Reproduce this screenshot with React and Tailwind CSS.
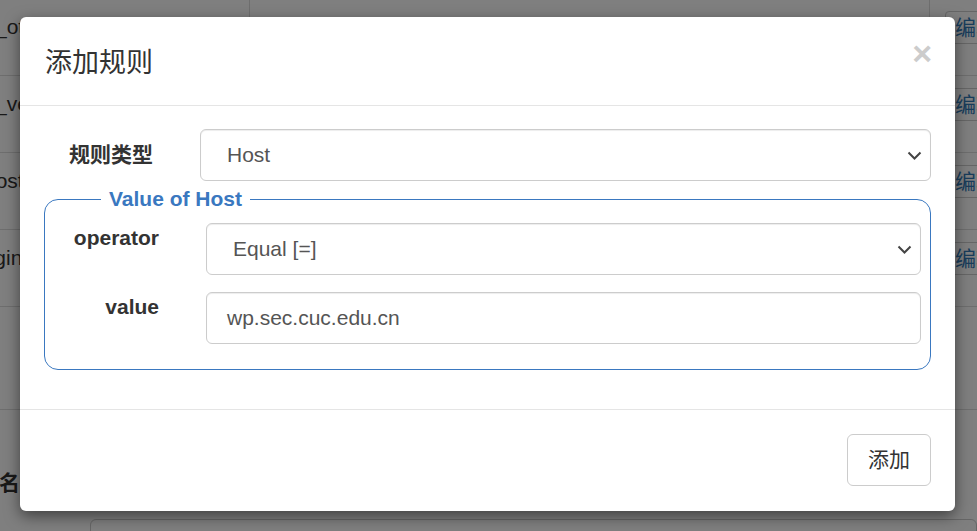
import React from 'react';

const rows = [
  { name: '_other', cls: 'ml-[-5px]' },
  { name: '_version', cls: 'ml-[-5px]' },
  { name: 'host', cls: 'ml-[-16px]' },
  { name: 'origin', cls: 'ml-[-29px]' },
];

const Chevron = () => (
  <svg width="15" height="9" viewBox="0 0 15 9" fill="none">
    <path d="M1.5 1.5l6 6 6-6" stroke="#444" strokeWidth="2" />
  </svg>
);

const FakeSelect = ({ value, className = '' }) => (
  <div
    className={`flex h-[52px] flex-1 items-center justify-between rounded-[6px] border border-[#ccc] bg-white pl-[26px] pr-[8px] text-[21px] text-[#555] shadow-[inset_0_1px_1px_rgba(0,0,0,0.075)] ${className}`}
  >
    <span>{value}</span>
    <Chevron />
  </div>
);

const App = () => {
  return (
    <div className="relative h-[531px] w-[977px] overflow-hidden bg-white font-['Liberation_Sans','Noto_Sans_CJK_SC',sans-serif] text-[#333]">
      {/* page behind the dialog */}
      <div className="mt-[-1px]">
        {rows.map((row) => (
          <div key={row.name} className="flex h-[77px] border-b border-[#ddd]">
            <div className="w-[250px] shrink-0 border-r border-[#ddd] pt-[13px] text-[21px] leading-[30px]">
              <span className={`block whitespace-nowrap ${row.cls}`}>{row.name}</span>
            </div>
            <div className="w-[680px] shrink-0 border-r border-[#ddd]" />
            <div className="min-w-0 flex-1 overflow-hidden pl-[15px] pt-[12px]">
              <span className="flex h-[33px] w-[60px] items-center rounded-[4px] border border-[#ccc] pl-[9px] text-[21px] text-[#337ab7]">
                编辑
              </span>
            </div>
          </div>
        ))}
        <div className="h-[103px] border-b border-[#ddd]" />
        <div className="pt-[58px] text-[21px] font-bold leading-[30px]">
          <span className="ml-[-43px] block whitespace-nowrap">规则名</span>
        </div>
        <div className="ml-[90px] mt-[21px] h-[52px] rounded-[6px] border border-[#ccc]" />
      </div>

      {/* overlay + dialog */}
      <div className="absolute inset-0 bg-black/50">
        <div className="ml-[20px] mt-[17px] flex h-[494px] w-[935px] flex-col rounded-[6px] bg-white shadow-[0_5px_15px_rgba(0,0,0,0.5)]">
          <div className="flex h-[89px] items-start justify-between border-b border-[#e5e5e5] pl-[25px] pr-[23px] pt-[27px]">
            <h4 className="text-[27px] leading-[38px] text-[#333]">添加规则</h4>
            <span className="mt-[-10px] text-[34px] font-bold leading-[38px] text-[#cccccc]">×</span>
          </div>

          <div className="h-[304px] border-b border-[#e5e5e5] px-[24px] pt-[23px]">
            <div className="flex items-center">
              <label className="w-[156px] pr-[47px] text-right text-[21px] font-bold leading-[30px]">规则类型</label>
              <FakeSelect value="Host" />
            </div>

            <fieldset className="mt-[3px] rounded-[14px] border border-[#3a78c0] pb-[25px] pt-[9px]">
              <legend className="ml-[56px] px-[8px] text-[21px] font-bold leading-[30px] text-[#3a78c0]">
                Value of Host
              </legend>
              <div className="flex items-start">
                <label className="w-[161px] pr-[47px] text-right text-[21px] font-bold leading-[30px]">operator</label>
                <FakeSelect value="Equal [=]" className="mr-[9px]" />
              </div>
              <div className="mt-[17px] flex items-start">
                <label className="w-[161px] pr-[47px] text-right text-[21px] font-bold leading-[30px]">value</label>
                <div className="mr-[9px] flex h-[52px] flex-1 items-center rounded-[6px] border border-[#ccc] pl-[20px] text-[21px] text-[#555] shadow-[inset_0_1px_1px_rgba(0,0,0,0.075)]">
                  wp.sec.cuc.edu.cn
                </div>
              </div>
            </fieldset>
          </div>

          <div className="flex flex-1 items-start justify-end pr-[24px] pt-[24px]">
            <button className="h-[52px] w-[84px] rounded-[6px] border border-[#ccc] bg-white text-[21px] text-[#333]">
              添加
            </button>
          </div>
        </div>
      </div>
    </div>
  );
};

export default App;
